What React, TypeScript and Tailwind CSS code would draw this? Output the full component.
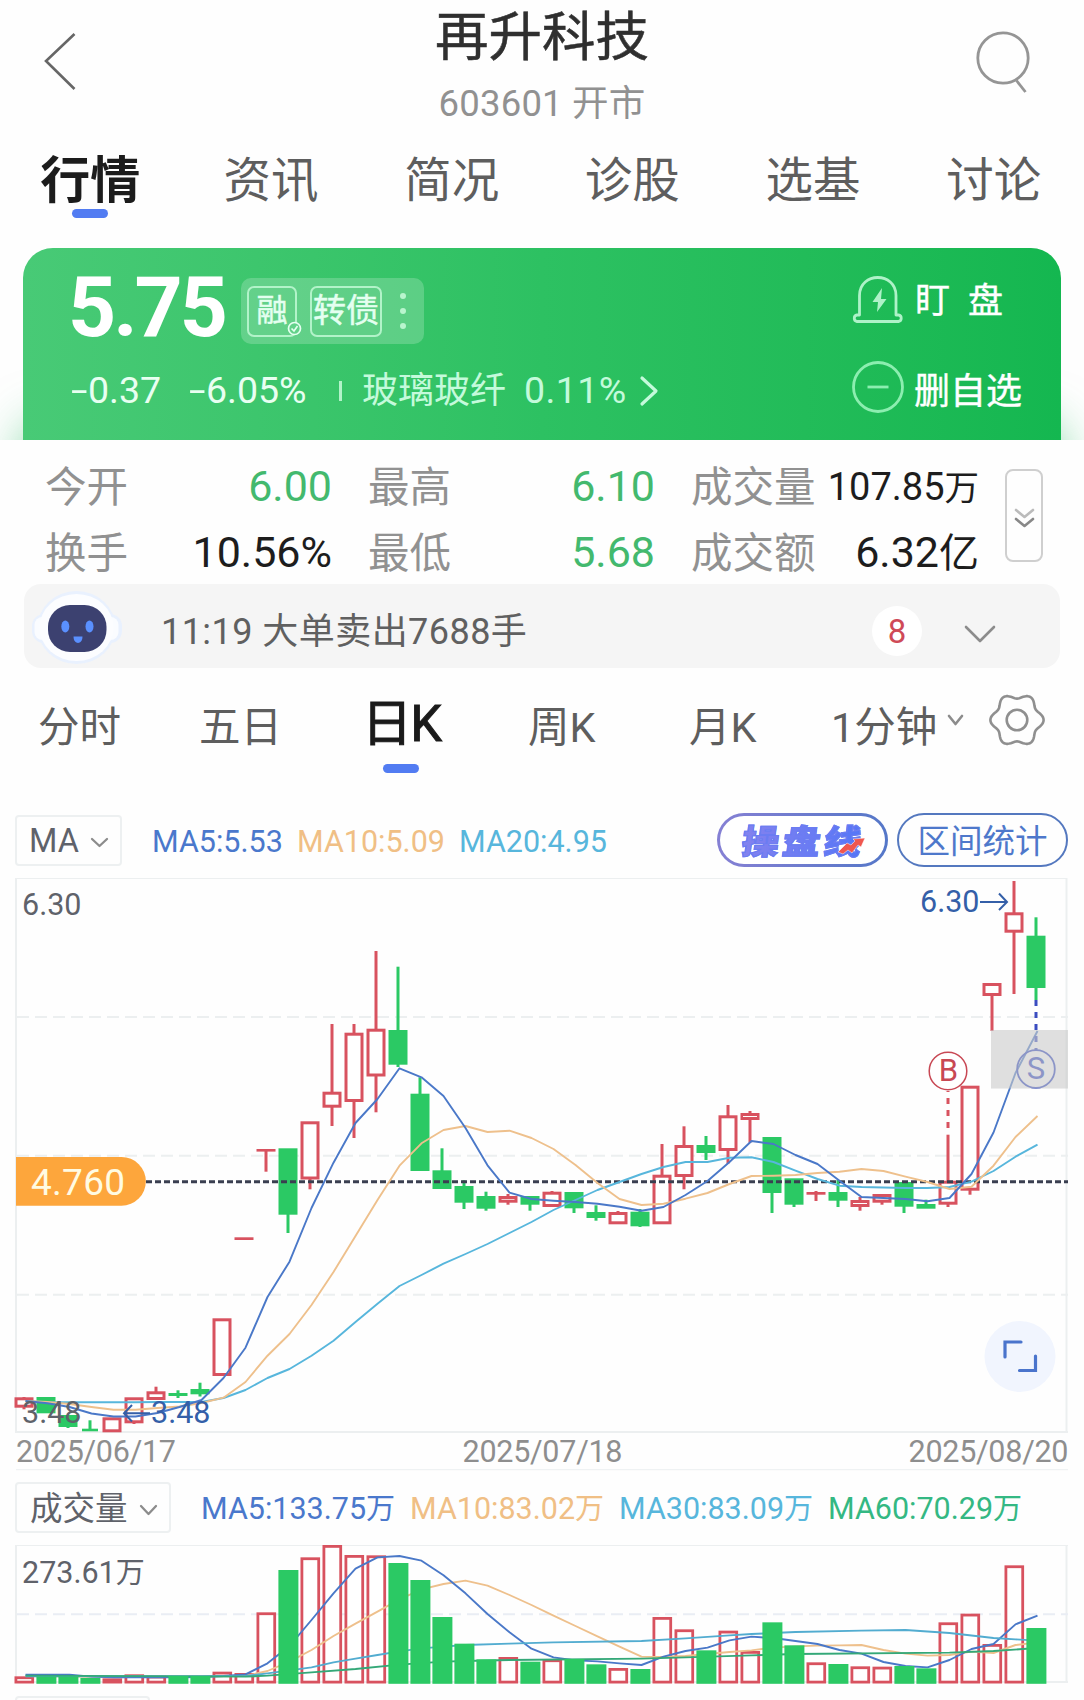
import React from "react";

const RED = "#d8525f";
const GREEN = "#2bc964";

// [direction, high, bodyTop, bodyBottom, low] in page y units; the chart's viewBox carries the origin.
type Candle = ["r" | "g", number, number, number, number];
const CANDLES: Candle[] = [
  ["r", 1397, 1397.3, 1407.7, 1409.3], ["g", 1397, 1397, 1413.3, 1413.3], ["g", 1415, 1415, 1427, 1428],
  ["g", 1420.3, 1428.7, 1431.3, 1431.3], ["r", 1417.3, 1417.3, 1432.3, 1432.3], ["r", 1397.3, 1397.3, 1423.3, 1424],
  ["r", 1386.7, 1391.3, 1400, 1400], ["g", 1390.3, 1393, 1396, 1398], ["g", 1382.7, 1389, 1394.3, 1396.5],
  ["r", 1318.3, 1318.3, 1376, 1376], ["r", 1237.3, 1237.3, 1240, 1240], ["r", 1149, 1149, 1151.6, 1171.7],
  ["g", 1148.3, 1148.3, 1214.7, 1233], ["r", 1121.3, 1121.3, 1179.5, 1189.3], ["r", 1024, 1091.7, 1107.7, 1126],
  ["r", 1024, 1032.7, 1102, 1138], ["r", 951, 1028.7, 1076.5, 1112.3], ["g", 966.7, 1030, 1064.7, 1067],
  ["g", 1077.3, 1093.7, 1171, 1171], ["g", 1148.3, 1170.3, 1189, 1189], ["g", 1180.3, 1186, 1202.7, 1209],
  ["g", 1191.7, 1196, 1208.7, 1210.7], ["r", 1194, 1196, 1202.7, 1204.7], ["g", 1196, 1196, 1204.7, 1210.7],
  ["r", 1191, 1191.7, 1207, 1207], ["g", 1192, 1192, 1208.3, 1213], ["g", 1205.3, 1212, 1218, 1220.7],
  ["r", 1211, 1212, 1224.3, 1224.3], ["g", 1209, 1211.7, 1226.3, 1227], ["r", 1144, 1174.7, 1224.3, 1224.3],
  ["r", 1126.3, 1145, 1177, 1189.3], ["g", 1136, 1145, 1153, 1160], ["r", 1105, 1115.3, 1151, 1163.7],
  ["r", 1111, 1113, 1120, 1142.7], ["g", 1137, 1137, 1193, 1213], ["g", 1178.3, 1178.3, 1204.7, 1207],
  ["r", 1191, 1192, 1194.7, 1201], ["g", 1180, 1192, 1200.7, 1207], ["r", 1197, 1200, 1207, 1210.7],
  ["r", 1194, 1194, 1202.7, 1204.7], ["g", 1182, 1182, 1206.7, 1213], ["g", 1199.7, 1204, 1208.7, 1208.7],
  ["r", 1134.7, 1180.7, 1204.7, 1207], ["r", 1085.7, 1085.7, 1190.7, 1194.7], ["r", 983, 983, 996, 1031],
  ["r", 881, 912.3, 932.7, 994], ["g", 917.3, 935.7, 988, 1000],
];

const MA5 = [1401, 1403.3, 1407, 1413.5, 1416.5, 1416.5, 1413, 1407, 1400, 1378, 1347.7, 1297, 1261.7, 1208, 1162.7, 1123, 1099, 1068.3, 1077.3, 1096, 1128, 1165.3, 1192.7, 1199, 1200.7, 1202, 1203.7, 1206.7, 1210.7, 1207, 1195, 1181, 1162, 1141, 1144, 1155, 1164, 1180.7, 1197, 1198, 1199, 1201.3, 1198, 1174, 1132.5, 1073, 1031];
const MA10 = [1401, 1402, 1404, 1407, 1409.7, 1409.7, 1408, 1406.5, 1403, 1397.7, 1382, 1355.7, 1334, 1305, 1272, 1236, 1200, 1165.7, 1143.3, 1130, 1126, 1132, 1130.7, 1138, 1149, 1165, 1183, 1199, 1205, 1203.7, 1198.7, 1193, 1184, 1176, 1175.7, 1175, 1173, 1171.7, 1169, 1171, 1176.7, 1182, 1189, 1186.7, 1165.7, 1137, 1116];
const MA20 = [1401, 1402.3, 1402.3, 1402.3, 1402.3, 1402.3, 1402, 1402, 1402, 1398, 1390, 1378, 1369, 1355.7, 1340.7, 1322, 1303.7, 1286, 1275, 1263.7, 1254, 1244, 1233, 1222, 1210, 1200, 1190, 1182, 1174, 1167, 1162, 1162, 1157.7, 1157.3, 1162, 1170.7, 1179, 1185.7, 1187, 1187.5, 1188, 1188, 1187, 1181.7, 1171, 1156.7, 1144.7];

// Volume bar tops and averages, in thirds of a pixel below y=1470.
const VOL = [619, 620, 620, 624, 625, 613, 617, 618, 618, 605, 609, 427, 300, 262, 225, 255, 256, 279, 330, 441, 521, 568, 561, 575, 568, 567, 583, 594, 597, 441, 478, 541, 482, 543, 457, 526, 577, 582, 589, 590, 588, 595, 457, 431, 522, 286, 474];
const VMA5: [number, number][] = [614, 614, 614, 620, 622, 622, 622, 622, 621, 618, 613, 580, 528, 450, 370, 296, 262, 258, 272, 316, 370, 432, 487, 536, 562, 571, 574, 580, 585, 560, 543, 533, 511, 500, 504, 513, 522, 540, 551, 576, 588, 592, 570, 537, 522, 463, 437].map((v, i) => [i, v]);
const VMA10: [number, number][] = [[0, 618], [4, 621], [10, 618], [11, 603], [12, 575], [13, 540], [14, 498], [15, 461], [16, 425], [17, 388], [18, 358], [19, 342], [20, 332], [21, 347], [22, 375], [23, 405], [24, 437], [25, 468], [26, 499], [27, 530], [28, 560], [29, 561], [30, 558], [31, 552], [32, 546], [33, 541], [34, 533], [35, 529], [36, 527], [37, 526], [38, 525], [39, 540], [40, 551], [41, 557], [42, 555], [43, 545], [44, 549], [45, 525], [46, 517]];
const VMA30: [number, number][] = [[0, 619], [10, 618], [11, 610], [13, 592], [14, 577], [15, 566], [16, 555], [17, 544], [18, 535], [19, 530], [20, 525], [22, 521], [24, 517], [28, 513], [30, 505], [32, 496], [33, 492], [35, 486], [38, 482], [40, 480], [42, 489], [44, 504], [45, 508], [46, 512]];
const VMA60: [number, number][] = [[0, 617], [10, 620], [11, 617], [13, 607], [15, 597], [17, 584], [19, 575], [20, 573], [22, 570], [28, 566], [30, 562], [33, 556], [35, 552], [42, 548], [44, 543], [46, 534]];

const line = (ys: number[]) => ys.map((y, i) => `${25.5 + i * 22},${y}`).join(" ");
const vline = (p: [number, number][]) => p.map(([i, v]) => `${25.5 + i * 22},${1470 + v / 3}`).join(" ");

function Chevron({ w, h, stroke, sw, className = "" }: { w: number; h: number; stroke: string; sw: number; className?: string }) {
  return (
    <svg width={w + 4} height={h + 4} className={className} fill="none">
      <polyline points={`2,2 ${2 + w / 2},${h + 2} ${w + 2},2`} stroke={stroke} strokeWidth={sw} strokeLinecap="round" strokeLinejoin="round" />
    </svg>
  );
}

function Header() {
  return (
    <header className="flex h-[130px] items-start justify-between">
      <svg width="120" height="120" fill="none" className="shrink-0">
        <polyline points="74.5,34 46,61 74.5,89" stroke="#666" strokeWidth="2.6" />
      </svg>
      <div className="flex flex-col items-center">
        <h1 className="mt-[11px] text-[53.5px] leading-[53px] text-[#2f2f2f] [-webkit-text-stroke:0.5px_#2f2f2f]">再升科技</h1>
        <div className="mt-[20px] text-[36.5px] leading-[40px] tracking-[0.2px] text-[#919191]">603601 开市</div>
      </div>
      <svg width="120" height="120" fill="none" stroke="#959595" strokeWidth="2.8" className="shrink-0">
        <circle cx="39" cy="58" r="25.2" />
        <path d="M52.5 80.500 L61.5 92" />
      </svg>
    </header>
  );
}

function Tabs() {
  return (
    <nav className="grid h-[118px] grid-cols-6 text-center text-[47.500px] leading-[60px] text-[#5e5e5e]">
      {["行情", "资讯", "简况", "诊股", "选基", "讨论"].map((t, i) => (
        <div key={t} className="flex flex-col items-center pt-[21px]">
          <span className={i === 0 ? "text-[50px] leading-[60px] font-bold text-[#1c1c1c]" : ""}>{t}</span>
          {i === 0 && <i className="-mt-[2px] h-[9px] w-[36px] rounded-full bg-[#527cf2]" />}
        </div>
      ))}
    </nav>
  );
}

function Minus() {
  return <span className="inline-block w-[17px] origin-left scale-x-[1.6]">-</span>;
}

function Quote() {
  return (
    <div className="h-[192px] overflow-hidden px-[23px]">
      <section className="flex h-[192px] justify-between rounded-t-[30px] bg-linear-to-r from-[#48ca76] via-[#2dc162] to-[#14b750] text-white shadow-[0_175px_50px_0px_rgba(30,185,90,0.6)]">
        <div className="pl-[48px]">
          <div className="flex h-[98px] items-start pt-[28px]">
            <div className="-ml-[3px] w-[173px] text-[84px] leading-[63px] font-bold tracking-[-3px]">5.75</div>
            <div className="mt-[2px] flex h-[66px] w-[183px] items-center rounded-[10px] bg-white/20 pl-[6px] text-[#e4fff0]">
              <div className="relative flex h-[51px] w-[50px] items-center justify-center rounded-[7px] border-2 border-[#b2f3c9] pb-[2px] text-[31px] leading-none [-webkit-text-stroke:0.5px]">
                融
                <svg className="absolute -right-[7px] -bottom-[1px]" width="15" height="15" fill="none" stroke="#e4fff0" strokeWidth="1.7">
                  <circle cx="7.5" cy="7.5" r="6" fill="#62d289" />
                  <path d="M4.5 7.5 L7 10 L10.5 5" />
                </svg>
              </div>
              <div className="ml-[13px] flex h-[51px] w-[72px] items-center justify-center rounded-[7px] border-2 border-[#b2f3c9] pb-[2px] text-[33px] leading-none whitespace-nowrap [-webkit-text-stroke:0.5px]">转债</div>
              <div className="ml-[18px] flex flex-col gap-[9px]">
                <i className="size-[6px] rounded-full bg-[#b9f5ce]" />
                <i className="size-[6px] rounded-full bg-[#b9f5ce]" />
                <i className="size-[6px] rounded-full bg-[#b9f5ce]" />
              </div>
            </div>
          </div>
          <div className="mt-[26px] flex h-[38px] items-center text-[37.5px] leading-none whitespace-nowrap text-[#e8fff1]">
            <span className="w-[118px]"><Minus />0.37</span>
            <span className="w-[150px]"><Minus />6.05%</span>
            <i className="h-[20px] w-[3px] bg-[#b2f3c9]" />
            <span className="ml-[20px] text-[36px] text-[#c4fadb]">玻璃玻纤</span>
            <span className="ml-[18px] w-[103px] text-[#c4fadb] tracking-[0.4px]">0.11%</span>
            <svg width="20" height="32" fill="none" className="ml-[12px]">
              <polyline points="3,3 17,16 3,29" stroke="#c4fadb" strokeWidth="3.2" strokeLinecap="round" strokeLinejoin="round" />
            </svg>
          </div>
        </div>
        <div className="w-[211px] pt-[24px]">
          <div className="flex h-[54px] items-center">
            <svg width="56" height="54" fill="none" stroke="#aef2c8" strokeWidth="2.8" strokeLinejoin="round">
              <path d="M9.500 43 V23.500 C9.500 -0.500 46 -0.500 46 23.500 V43 H48.500 A3.300 3.300 0 0 1 48.500 49.500 H7 A3.300 3.300 0 0 1 7 43 Z" />
              <path d="M32 16 L22.500 30 H28 L27 40 L36.500 27 H31 Z" fill="#aef2c8" stroke="none" />
            </svg>
            <span className="mt-[4px] ml-[9px] text-[35px] leading-none tracking-[18px] [-webkit-text-stroke:0.4px]">盯盘</span>
          </div>
          <div className="mt-[34px] flex h-[54px] items-center">
            <svg width="56" height="54" fill="none" stroke="#8ceeb0" strokeWidth="2.8">
              <circle cx="28" cy="27" r="24.500" />
              <path d="M17.500 27 H38.500" />
            </svg>
            <span className="mt-[9px] ml-[8px] text-[36px] leading-none whitespace-nowrap [-webkit-text-stroke:0.4px]">删自选</span>
          </div>
        </div>
      </section>
    </div>
  );
}

function Stats() {
  const label = "text-[41.500px] text-[#919191]";
  const value = "-mt-[3px] text-right";
  return (
    <section className="flex h-[144px] pt-[15px] pl-[45px] leading-none whitespace-nowrap">
      <div className="grid w-[934px] grid-cols-[83px_204px_36px_83px_204px_36px_125px_auto] grid-rows-[66px_66px] items-center text-[43px] text-[#1d1d1d]">
        <span className={label}>今开</span><span className={`${value} text-[#43b96e]`}>6.00</span><i />
        <span className={label}>最高</span><span className={`${value} text-[#43b96e]`}>6.10</span><i />
        <span className={label}>成交量</span><span className={`${value} text-[38px]`}>107.85<span className="text-[34.500px]">万</span></span>
        <span className={label}>换手</span><span className={value}>10.56%</span><i />
        <span className={label}>最低</span><span className={`${value} text-[#43b96e]`}>5.68</span><i />
        <span className={label}>成交额</span><span className={value}>6.32<span className="text-[40px]">亿</span></span>
      </div>
      <div className="mt-[14px] ml-[26px] flex h-[93px] w-[38px] flex-col items-center justify-center rounded-[8px] border-[2.500px] border-[#cfcfcf] pt-[5px]">
        <Chevron w={17} h={7} stroke="#bbb" sw={2.600} />
        <Chevron w={17} h={7} stroke="#888" sw={2.600} className="-mt-[2px]" />
      </div>
    </section>
  );
}

function Message() {
  return (
    <section className="mx-[24px] flex h-[84px] items-center rounded-[17px] bg-[#f5f5f5]">
      <svg width="100" height="84">
        <ellipse cx="52.500" cy="43.500" rx="39" ry="36.500" fill="#e9f1fe" />
        <rect x="8" y="30" width="90" height="29" rx="12" fill="#e9f1fe" />
        <rect x="10.500" y="33" width="84" height="23" rx="8" fill="#fafcff" />
        <ellipse cx="52.500" cy="43.500" rx="37" ry="33.500" fill="#fcfdff" />
        <rect x="24" y="21" width="58.500" height="47" rx="22" fill="#3c4170" />
        <ellipse cx="41.300" cy="42.500" rx="4" ry="6" fill="#5a90ff" />
        <ellipse cx="65.500" cy="42.500" rx="4" ry="6" fill="#5a90ff" />
        <path d="M49.500 52.500 H58.500 C58.500 61 49.500 61 49.500 52.500 Z" fill="#5a90ff" />
      </svg>
      <span className="mt-[11px] ml-[37px] w-[711px] text-[36px] leading-[50px] tracking-[0.45px] whitespace-nowrap text-[#606060]">11:19 大单卖出7688手</span>
      <span className="mt-[10px] flex size-[50px] items-center justify-center rounded-full bg-white pt-[1px] text-[33px] leading-none text-[#cf4a57]">8</span>
      <Chevron w={28} h={14} stroke="#8c8c8c" sw={2.600} className="mt-[15px] ml-[42px]" />
    </section>
  );
}

const GEAR = Array.from({ length: 120 }, (_, k) => {
  const a = (k * Math.PI) / 60;
  const r = 24 + 2.600 * Math.cos(6 * a);
  return `${28 + r * Math.cos(a)},${28 + r * Math.sin(a)}`;
}).join(" ");

function Periods() {
  return (
    <nav className="flex h-[145px] items-start pt-[32px] pl-[38px] text-[41.500px] leading-[56px] whitespace-nowrap text-[#5e5e5e]">
      <span className="w-[161px]">分时</span>
      <span className="w-[163px]">五日</span>
      <span className="-mt-[4px] flex w-[166px] flex-col text-[50px] text-[#1a1a1a] [-webkit-text-stroke:1.100px_#1a1a1a]">
        <span className="tracking-[-1.500px]">日K</span>
        <i className="mt-[12px] ml-[21px] h-[9px] w-[36px] rounded-full bg-[#527cf2]" />
      </span>
      <span className="w-[161px]">周K</span>
      <span className="w-[142px]">月K</span>
      <span className="w-[103px]">1分钟</span>
      <Chevron w={13} h={8} stroke="#8c8c8c" sw={2.600} className="mt-[14px] ml-[13px]" />
      <svg width="56" height="56" fill="none" stroke="#8f8f8f" strokeWidth="2.600" strokeLinejoin="round" className="mt-[-8px] ml-[25px]">
        <polygon points={GEAR} />
        <circle cx="28" cy="28" r="10.300" />
      </svg>
    </nav>
  );
}

function MaRow() {
  return (
    <div className="flex h-[54px] items-center pr-[16px] pl-[15px] text-[30.500px] leading-none whitespace-nowrap">
      <div className="flex h-[51px] w-[107px] items-center rounded-[4px] border-2 border-[#edf0f1] pt-[2px] pl-[12px] text-[32.500px] text-[#5f626a]">
        MA
        <Chevron w={15} h={7} stroke="#8c8c8c" sw={2.300} className="mt-[3px] ml-[11px]" />
      </div>
      <span className="mt-[4px] ml-[30px] w-[145px] text-[#4a78cc]">MA5:5.53</span>
      <span className="mt-[4px] w-[162px] text-[#f0bf85]">MA10:5.09</span>
      <span className="mt-[4px] w-[258px] text-[#57b6dc]">MA20:4.95</span>
      <div className="h-[54px] w-[171px] rounded-full bg-linear-to-r from-[#8580d4] to-[#5477c8] p-[3px]">
        <div className="relative flex h-full items-center rounded-full bg-white pl-[22px]">
          <span className="inline-block -skew-x-[7deg] scale-y-[0.9] bg-linear-to-r from-[#8482ee] to-[#5075f8] bg-clip-text pt-[3px] pr-[6px] text-[37.500px] leading-[44px] font-black tracking-[3.500px] text-transparent [-webkit-text-stroke:1.200px_#6b7cf2]">操盘线</span>
          <svg className="absolute top-[21px] left-[118px]" width="30" height="20">
            <path d="M0 15 L9 6 L13 8 L17 4 L15 2 L27 1 L23 10 L20 8 L14 16 L10 13 L5 17 Z" fill="#f0574f" stroke="#fff" strokeWidth="0.5" />
          </svg>
        </div>
      </div>
      <div className="ml-[9px] flex h-[54px] w-[171px] items-center justify-center rounded-full border-2 border-[#5478bf] pt-[4px] text-[32.500px] text-[#4e78cb]">区间统计</div>
    </div>
  );
}

function PriceChart() {
  return (
    <svg className="block" width="1084" height="604" viewBox="0 867 1084 604" fill="none">
      <g stroke="#eceff0">
        <path d="M16 878.500 H1067" strokeWidth="1.200" />
        <path d="M16 878 V1433 M1066.500 878 V1433 M16 1432 H1068" strokeWidth="2" />
        <path d="M17 1017 H1068 M17 1155.700 H1068 M17 1294.700 H1068" strokeWidth="2" strokeDasharray="12 6" />
        <path d="M16 1469.700 H1068" strokeWidth="1" />
      </g>
      {CANDLES.map(([d, hi, t, b, lo], i) => {
        const c = d === "r" ? RED : GREEN;
        const x = 24 + i * 22;
        const w = i === 3 ? 16 : 19;
        const solid = d === "g" || b - t < 4;
        return (
          <g key={i} stroke={c}>
            {hi < t && <path d={`M${x} ${hi} V${t + 1}`} strokeWidth="3" />}
            {lo > b && <path d={`M${x} ${b - 1} V${lo}`} strokeWidth="3" />}
            {solid ? (
              <rect x={x - w / 2} y={t} width={w} height={b - t} fill={c} stroke="none" />
            ) : (
              <rect x={x - 8} y={t + 1.500} width="16" height={b - t - 3} fill="#fff" strokeWidth="3" />
            )}
          </g>
        );
      })}
      <path d="M146 1181.700 H1068" stroke="#3a3f50" strokeWidth="3" strokeDasharray="6 3" />
      <g strokeWidth="1.900" strokeLinejoin="round">
        <polyline points={line(MA20)} stroke="#57b6dc" />
        <polyline points={line(MA10)} stroke="#eec08c" />
        <polyline points={line(MA5)} stroke="#4a78c8" />
      </g>
      <path d="M948 1134 V1091" stroke={RED} strokeWidth="3" strokeDasharray="6 6" strokeDashoffset="-6" />
      <path d="M1036 1000 V1050" stroke="#3a4cc0" strokeWidth="3" strokeDasharray="6 6" />
      <circle cx="948" cy="1071" r="18.800" stroke="#c84854" strokeWidth="1.500" fill="#fff" />
      <text x="948.500" y="1080.500" fontSize="31" textAnchor="middle" fill="#c84854">B</text>
      <circle cx="1036" cy="1069" r="18.800" stroke="#3048c4" strokeWidth="1.800" />
      <text x="1036" y="1079" fontSize="31" textAnchor="middle" fill="#3048c4">S</text>
      <rect x="991" y="1030" width="77" height="58.500" fill="#cacaca" fillOpacity="0.6" />

      <path d="M16 1157 H121.500 A24.300 24.300 0 0 1 121.500 1205.700 H16 Z" fill="#fda63c" />
      <text x="31" y="1194.500" fontSize="37" fill="#fffbe2" textLength="94">4.760</text>
      <g fontSize="30.500">
        <text x="22" y="915" fill="#5f626a">6.30</text>
        <text x="22" y="1423" fill="#5f626a">3.48</text>
        <text x="920" y="911.500" fill="#345fa8">6.30</text>
        <text x="151" y="1423" fill="#345fa8">3.48</text>
      </g>
      <path d="M980 902 H1007 M999 893.500 L1007 902 L999 910 M150 1413.300 H124 M132 1405 L124 1413.300 L132 1421.500" stroke="#345fa8" strokeWidth="2" />
      <g fontSize="30.500" fill="#8e8e8e">
        <text x="16" y="1461.500" textLength="160">2025/06/17</text>
        <text x="462.500" y="1461.500" textLength="160">2025/07/18</text>
        <text x="908.500" y="1461.500" textLength="160">2025/08/20</text>
      </g>
      <circle cx="1020" cy="1356.500" r="35.500" fill="#f1f5fe" />
      <path d="M1005 1357 V1342 H1021 M1035.500 1356 V1370.500 H1019.500" stroke="#4a74cc" strokeWidth="3.200" strokeLinecap="round" />
    </svg>
  );
}

function VolumeRow() {
  const items: [string, string][] = [
    ["MA5:133.75", "text-[#4a78cc]"],
    ["MA10:83.02", "text-[#f0bf85]"],
    ["MA30:83.09", "text-[#57b6dc]"],
    ["MA60:70.29", "text-[#34b883]"],
  ];
  return (
    <div className="flex h-[73px] items-start pt-[11px] pl-[15px] text-[30.500px] leading-none whitespace-nowrap">
      <div className="flex h-[51px] w-[156px] items-center rounded-[4px] border-2 border-[#edf0f1] pt-[3px] pl-[13px] text-[32.500px] text-[#5f626a]">
        成交量
        <Chevron w={15} h={8} stroke="#8c8c8c" sw={2.300} className="mt-[1px] ml-[11px]" />
      </div>
      <div className="ml-[30px] flex h-[51px] items-center pt-[3px]">
        {items.map(([t, c]) => (
          <span key={t} className={`w-[209px] ${c}`}>{t}<span className="text-[29px]">万</span></span>
        ))}
      </div>
    </div>
  );
}

function VolumeChart() {
  return (
    <svg className="block" width="1084" height="152" viewBox="0 1544 1084 152" fill="none">
      <g stroke="#eceff0">
        <path d="M16 1545.500 H1068" strokeWidth="1.200" />
        <path d="M16 1545 V1683 M1066.500 1545 V1683 M16 1682 H1068" strokeWidth="2" />
        <path d="M17 1614.300 H1068" stroke="#e9edf4" strokeWidth="2" strokeDasharray="12 6" />
      </g>
      {VOL.map((v, i) => {
        const green = CANDLES[i][0] === "g";
        const y = 1470 + v / 3;
        const x = 24.300 + i * 22;
        return green ? null : <rect key={i} x={x - 8.400} y={y + 1.400} width="16.800" height={1683.500 - y - 2.800} fill="#fff" stroke={RED} strokeWidth="2.800" />;
      })}
      <g strokeWidth="1.900" strokeLinejoin="round">
        <polyline points={vline(VMA10)} stroke="#eec08c" />
        <polyline points={vline(VMA5)} stroke="#4a78c8" />
        <polyline points={vline(VMA30)} stroke="#52acd0" />
        <polyline points={vline(VMA60)} stroke="#34a878" />
      </g>
      {VOL.map((v, i) => {
        const y = 1470 + v / 3;
        return CANDLES[i][0] === "g" ? <rect key={i} x={14.400 + i * 22} y={y} width="20" height={1683.800 - y} fill={GREEN} /> : null;
      })}
      <text x="22" y="1582.500" fontSize="30.500" fill="#5f626a">273.61<tspan fontSize="29">万</tspan></text>
    </svg>
  );
}

export default function App() {
  return (
    <main className="h-[1700px] w-[1084px] overflow-hidden bg-[#fefefe] font-['Roboto','Noto_Sans_CJK_SC',sans-serif]">
      <Header />
      <Tabs />
      <Quote />
      <Stats />
      <Message />
      <Periods />
      <MaRow />
      <PriceChart />
      <VolumeRow />
      <VolumeChart />
      <div className="ml-[15px] h-[51px] w-[135px] rounded-[4px] border-2 border-[#edf0f1]" />
    </main>
  );
}
